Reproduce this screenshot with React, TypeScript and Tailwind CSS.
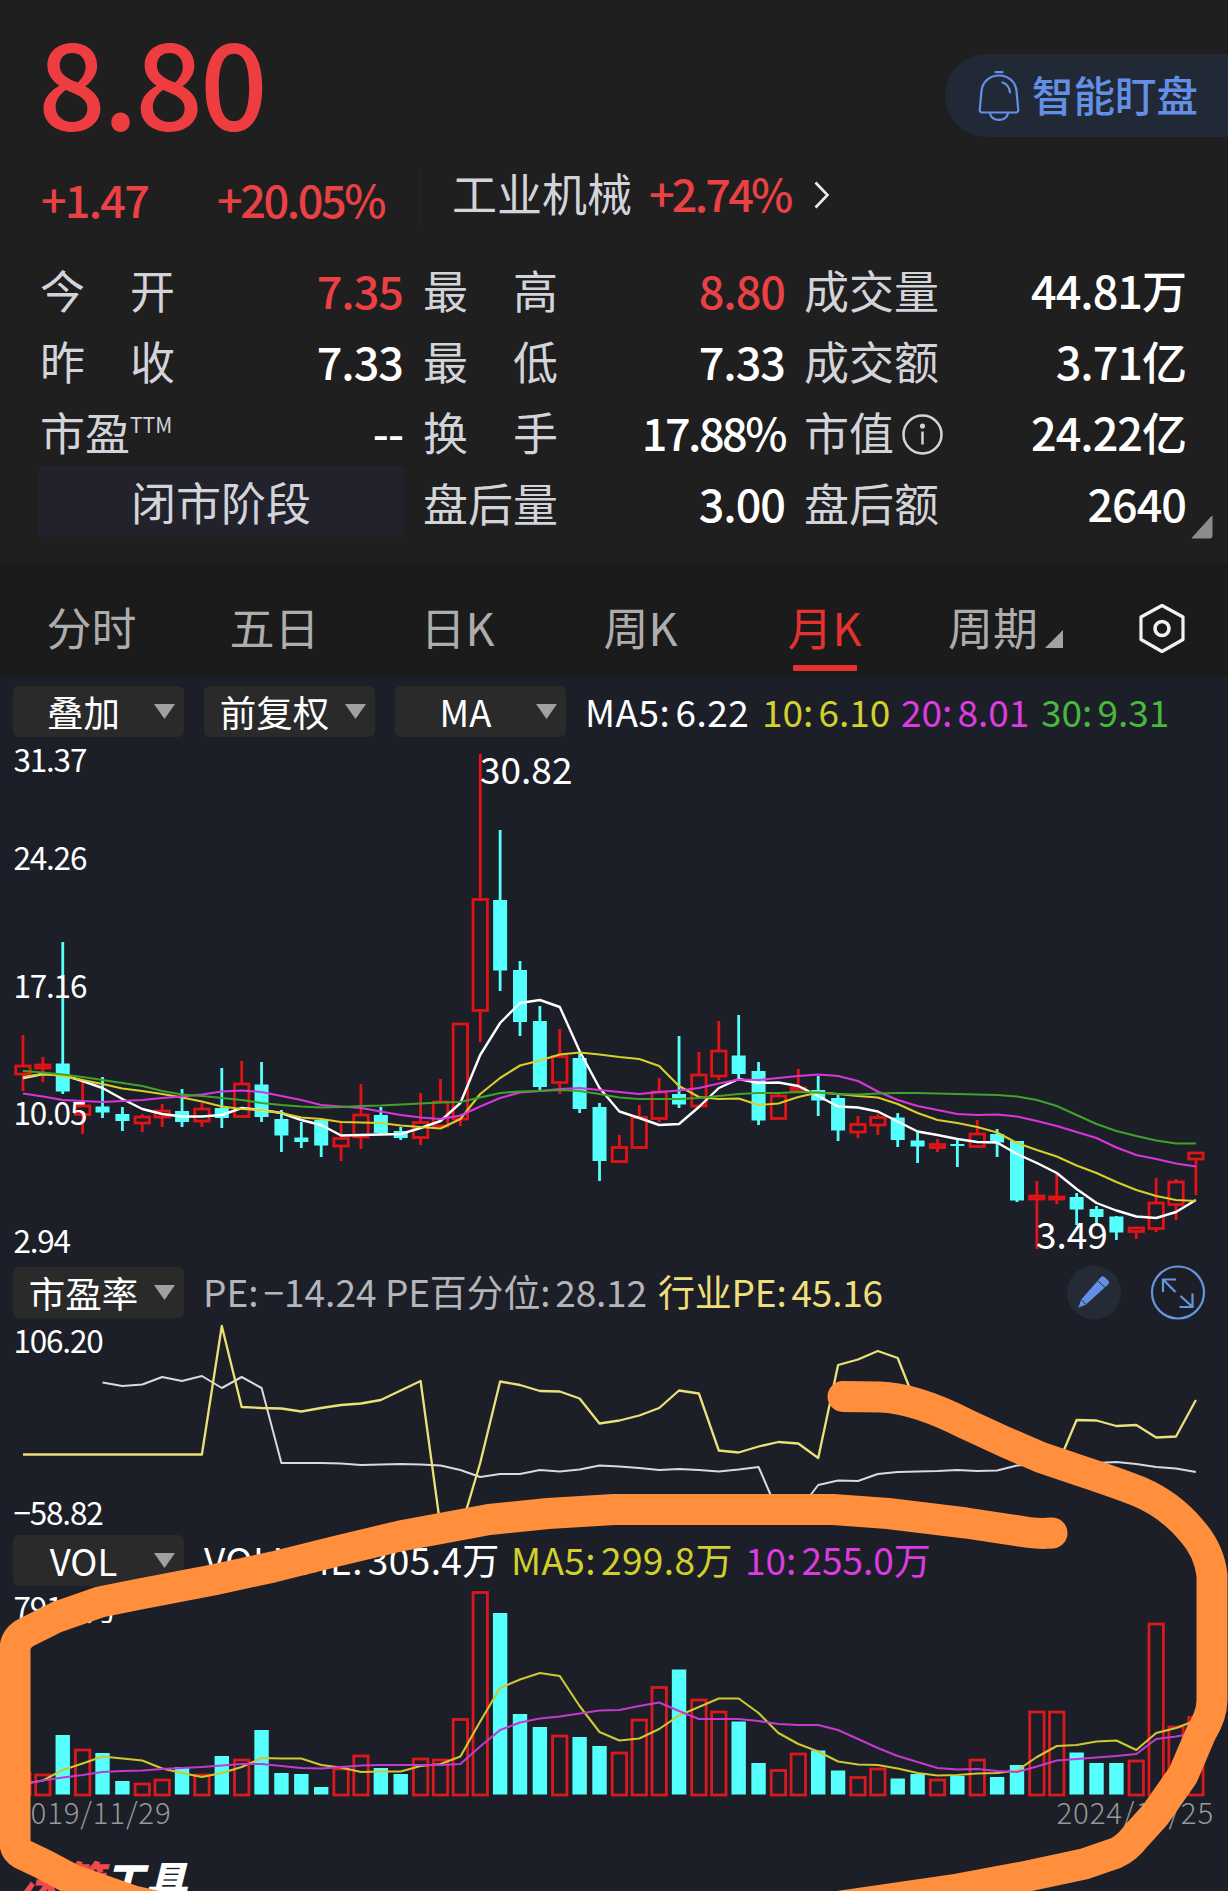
import React from "react";
import clsx from "clsx";

enum Trend {
  Up = "up",
  Down = "down",
}

// trend, high, body top, body bottom, low, volume top
type Bar = [Trend, number, number, number, number, number];

const U = Trend.Up;
const D = Trend.Down;

const bars: Bar[] = [
  [U, 1035, 1065, 1075, 1091, 1772],
  [U, 1057, 1064, 1069, 1082, 1774],
  [D, 942, 1063.5, 1091.5, 1094, 1735],
  [U, 1081, 1105, 1115.5, 1134, 1749],
  [D, 1077, 1106.5, 1112.5, 1118, 1753],
  [D, 1107, 1114, 1121, 1131, 1781],
  [U, 1114, 1116, 1124, 1132, 1783],
  [U, 1104, 1110, 1118, 1127, 1779],
  [D, 1089, 1111, 1122, 1127, 1767],
  [U, 1103, 1108, 1122, 1127, 1774],
  [D, 1068, 1108, 1118, 1128, 1756],
  [U, 1061, 1083, 1117.5, 1117.5, 1759],
  [D, 1062, 1084.5, 1117, 1122, 1730],
  [D, 1110, 1119, 1135.5, 1152, 1773],
  [D, 1122, 1137.5, 1142, 1148, 1774],
  [D, 1120, 1120, 1145.5, 1157, 1787],
  [U, 1123, 1137.5, 1147, 1161, 1768],
  [U, 1084, 1114, 1138, 1149, 1755],
  [D, 1107, 1115, 1133, 1134, 1768],
  [D, 1127, 1131, 1138, 1140, 1774],
  [U, 1093, 1121.5, 1138.5, 1145, 1758],
  [U, 1079, 1101, 1127, 1127, 1759],
  [U, 1023, 1023, 1120, 1126, 1718.5],
  [U, 754, 898.5, 1011.5, 1042, 1591.5],
  [D, 830, 900, 970.5, 991, 1613],
  [D, 961, 970, 1022, 1036, 1714],
  [D, 1006, 1021, 1087, 1091, 1727],
  [U, 1029, 1055.5, 1083.5, 1094, 1735],
  [D, 1052, 1058, 1109, 1113, 1737],
  [D, 1103, 1107, 1161, 1181, 1746],
  [U, 1135, 1146.5, 1162.5, 1163, 1752],
  [U, 1105, 1116.5, 1148.5, 1149, 1719],
  [U, 1078, 1091, 1119.5, 1122, 1686.5],
  [D, 1036, 1094, 1104.5, 1108, 1669.5],
  [U, 1052, 1074, 1107, 1107, 1699],
  [U, 1021, 1050, 1077, 1080, 1711],
  [D, 1015, 1055.5, 1074, 1078, 1721.5],
  [D, 1062, 1071, 1120.5, 1125, 1763],
  [U, 1093, 1095, 1119.5, 1119.5, 1769.5],
  [U, 1069, 1087, 1092, 1092, 1753],
  [D, 1076, 1090, 1100.5, 1116, 1750.5],
  [D, 1094, 1098, 1130.5, 1141, 1770.5],
  [U, 1116, 1123.5, 1133, 1138, 1776.5],
  [U, 1114, 1116.5, 1126, 1135, 1768],
  [D, 1113, 1117.5, 1140, 1147, 1778.5],
  [D, 1132, 1140.5, 1146.5, 1163, 1774],
  [U, 1139, 1143.5, 1148.5, 1152, 1779],
  [D, 1138, 1144, 1146, 1167, 1776],
  [U, 1120, 1133, 1147.5, 1148, 1759],
  [D, 1129, 1134, 1142.5, 1157, 1777],
  [D, 1141, 1141, 1200.5, 1202, 1765],
  [U, 1181, 1195, 1200, 1249, 1711],
  [U, 1173, 1196, 1200, 1204, 1711],
  [D, 1193, 1197, 1209.5, 1225, 1752.5],
  [D, 1206, 1209, 1217, 1223, 1763],
  [D, 1216, 1216.5, 1232.5, 1240, 1763],
  [U, 1227, 1227, 1232.5, 1239, 1760],
  [U, 1178, 1202, 1229.5, 1232, 1623],
  [U, 1179, 1181, 1205.5, 1220, 1726],
  [U, 1152, 1152, 1160, 1195, 1716.5],
];

const ma5 = [
  1078, 1074, 1075, 1081, 1088, 1099, 1109, 1114, 1116.5, 1116.5, 1115, 1108,
  1110, 1113, 1120, 1125, 1135.5, 1135, 1134.5, 1134, 1128, 1121, 1103, 1055,
  1023, 1003, 1000, 1007, 1051, 1088, 1111.5, 1118, 1125, 1124, 1107, 1088,
  1079, 1083, 1082.5, 1086, 1096, 1106.5, 1107.5, 1111.5, 1121.5, 1131.5, 1135,
  1139, 1142, 1142.5, 1154, 1163, 1173, 1189, 1203, 1210.5, 1216.5, 1218, 1212,
  1200,
];
const ma10 = [
  1077, 1074, 1076, 1080, 1084, 1088.5, 1091, 1094, 1097.5, 1101.5, 1106.5,
  1109, 1110, 1113, 1117.5, 1119, 1122, 1122.5, 1123, 1125.5, 1127, 1128.5,
  1119, 1094, 1078, 1065.5, 1060.5, 1054.5, 1052.5, 1054.5, 1057, 1059, 1066,
  1086, 1097, 1099, 1098.5, 1105, 1103.5, 1097, 1092.5, 1094, 1096, 1097.5,
  1104, 1113, 1120, 1123, 1127, 1132.5, 1143, 1150, 1156.5, 1165.5, 1173, 1182,
  1190, 1196, 1200, 1201,
];
const ma20 = [
  1093.5, 1096.5, 1100, 1101, 1102, 1101, 1100, 1098, 1096.5, 1094.5, 1091.5,
  1090.5, 1092, 1096, 1100, 1105, 1106.5, 1108, 1111.5, 1115, 1117.5, 1119,
  1115.5, 1106.5, 1098, 1092.5, 1091, 1089, 1088, 1090, 1092, 1094, 1092,
  1090.5, 1088, 1083.5, 1079.5, 1080, 1078, 1076, 1074.5, 1076, 1081, 1091.5,
  1100, 1106, 1110, 1114, 1115, 1114.5, 1116.5, 1121, 1126, 1132, 1138, 1147.5,
  1155, 1159, 1163.5, 1166.5,
];
const ma30 = [
  1071, 1072.5, 1074.5, 1077, 1080, 1083, 1086, 1091, 1094.5, 1096, 1098, 1100,
  1103, 1105, 1106.5, 1107.5, 1107, 1106, 1105.5, 1104.5, 1103.5, 1102.5, 1102,
  1097.5, 1093, 1091.5, 1091, 1090, 1091, 1094, 1097.5, 1099, 1099, 1099, 1098,
  1096, 1094, 1093, 1093, 1092, 1092.5, 1094, 1094.5, 1093.5, 1093, 1093,
  1093.5, 1094, 1094.5, 1095, 1096.5, 1100, 1106, 1115, 1124, 1131, 1136,
  1140.5, 1143.5, 1143.5,
];

const industryPe = [
  1454.5, 1454.5, 1454.5, 1454.5, 1454.5, 1454.5, 1454.5, 1454.5, 1454.5,
  1454.5, 1326, 1407, 1408, 1408.5, 1411.5, 1408, 1405, 1403.5, 1400, 1390.5,
  1381, 1527, 1530, 1463, 1381.5, 1385, 1391, 1391.5, 1398.5, 1423.5, 1420.5,
  1415.5, 1408, 1390.5, 1393.5, 1450.5, 1452.5, 1446.5, 1442, 1443.5, 1458,
  1365, 1359.5, 1351, 1358, 1408, 1413, 1421, 1431, 1440, 1447, 1440, 1467,
  1420, 1420.5, 1426, 1425, 1437.5, 1436.5, 1400,
];
// the stock's own series only begins four months in
const stockPe = [
  1382.5, 1386, 1384.5, 1377, 1381, 1376, 1388, 1377, 1388, 1463, 1463, 1463,
  1463.5, 1465, 1464.5, 1464, 1464.5, 1465.5, 1470, 1477, 1474, 1474, 1470,
  1471.5, 1469.5, 1465.5, 1466.5, 1468, 1470, 1469, 1470, 1471.5, 1469.5,
  1467, 1513, 1511, 1485, 1480.5, 1481, 1474, 1472, 1471.5, 1471, 1470, 1471,
  1470.5, 1465.5, 1464, 1464, 1464, 1463, 1462, 1464, 1467, 1468.5, 1472,
];

const volMa5 = [
  1784, 1780.5, 1770, 1763.5, 1756.5, 1758.5, 1760.5, 1768.5, 1773, 1777, 1773,
  1767, 1758, 1758.5, 1758.5, 1765, 1767.5, 1772, 1771.5, 1771.5, 1766, 1764,
  1756.5, 1721.5, 1688, 1679.5, 1673, 1676, 1706, 1732, 1740.5, 1738.5, 1729,
  1715.5, 1707, 1698.5, 1698.5, 1713, 1733, 1744, 1751.5, 1761.5, 1764.5, 1765,
  1768.5, 1773, 1775.5, 1775, 1773.5, 1773, 1770.5, 1757, 1746, 1745, 1741.5,
  1740.5, 1750, 1733, 1728, 1720.5,
];
const volMa10 = [
  1784, 1780.5, 1777.5, 1775, 1772, 1771, 1770.5, 1769, 1768, 1767, 1765.5,
  1764, 1764, 1766, 1768, 1768.5, 1767, 1765.5, 1765, 1765, 1765, 1765, 1764,
  1746.5, 1730, 1722.5, 1718.5, 1716.5, 1713.5, 1710.5, 1710, 1706, 1702.5,
  1711, 1719, 1719, 1719, 1721, 1724, 1725, 1725, 1730, 1739, 1748, 1756, 1762,
  1768, 1769.5, 1769, 1771, 1772, 1766.5, 1760.5, 1759, 1757.5, 1756, 1754,
  1739, 1736.5, 1733,
];

const tabs = ["分时", "五日", "日K", "周K", "月K"];

const x = (index: number) => 23 + index * 19.88;

const Line = ({
  values,
  color,
  offset = 0,
  width = 2.1,
}: {
  values: number[];
  color: string;
  offset?: number;
  width?: number;
}) => (
  <polyline
    points={values.map((y, i) => `${x(i + offset).toFixed(1)},${y}`).join(" ")}
    fill="none"
    stroke={color}
    strokeWidth={width}
    strokeLinejoin="round"
  />
);

const AxisLabel = ({ y, children }: { y: number; children: string }) => (
  <text
    x="13.500"
    y={y}
    fontSize="31.500"
    letterSpacing="-1.200"
    fill="#ffffff"
  >
    {children}
  </text>
);

const Dropdown = ({ label }: { label: string }) => (
  <button className="flex h-[51px] w-[171px] shrink-0 items-center rounded-md bg-[#2a2a2b]">
    <span className="w-[141px] text-center text-[36.500px] leading-[51px] text-white">
      {label}
    </span>
    <svg width="21" height="15" viewBox="0 0 21 15">
      <path d="M0 0h21L10.5 15z" fill="#9fa09f" />
    </svg>
  </button>
);

const Legend = ({
  name,
  value,
  className,
}: {
  name: string;
  value: string;
  className?: string;
}) => (
  <span className={clsx("flex gap-[5px]", className)}>
    <span>{name}:</span>
    <span>{value}</span>
  </span>
);

const Stat = ({
  label,
  value,
  red,
  children,
}: {
  label: string;
  value: string;
  red?: boolean;
  children?: React.ReactNode;
}) => (
  <div className="flex h-[71px] items-center justify-between pr-px pt-[3px]">
    <span className="flex items-center whitespace-pre text-[#d3d3da]">
      {label}
      {children}
    </span>
    <span
      className={clsx(
        "font-medium",
        value.endsWith("%") ? "tracking-[-2.5px]" : "tracking-[-1px]",
        red ? "text-[#ea4144]" : "text-white",
      )}
    >
      {value}
    </span>
  </div>
);

const Header = () => (
  <header className="h-[563px] bg-[#1f1f20]">
    <div className="flex h-[158px] justify-between pl-[38px]">
      <span className="text-[119px] font-medium leading-[157px] tracking-[-3px] text-[#ee3d41]">
        8.80
      </span>
      <button className="mt-[54px] flex h-[83px] w-[283px] items-center rounded-l-full bg-[#222936] pl-[33px] text-[#648fe6]">
        <svg
          width="42"
          height="50"
          viewBox="0 0 42 50"
          fill="none"
          stroke="currentColor"
          strokeWidth="2.200"
          strokeLinecap="round"
        >
          <path d="M17.500 1.200h7" />
          <path d="M4.500 41.500h33c2 0 3-1 2.700-3L38.500 20C37.500 10.500 30 4.500 21 4.500S4.500 10.500 3.500 20L1.800 38.500c-.3 2 .7 3 2.700 3z" />
          <path d="M12 42.500c1 4 4.500 6.300 9 6.300s8-2.300 9-6.300" />
          <path d="M24.500 11.500c4.500 1.500 7 5 7.500 10" />
        </svg>
        <span className="-mt-[3px] ml-3 text-[41.500px] font-medium">
          智能盯盘
        </span>
      </button>
    </div>
    <div className="flex h-[95px] items-start pl-[41px] text-[45px] text-[#ea4144]">
      <span className="w-[176px] font-medium leading-[81px] tracking-[-1.8px]">
        +1.47
      </span>
      <span className="w-[202px] font-medium leading-[81px] tracking-[-2.4px]">
        +20.05%
      </span>
      <span className="mt-2.5 h-[57px] w-px bg-[#242427]" />
      <span className="ml-8 w-[197px] leading-[69px] text-[#d3d3da]">
        工业机械
      </span>
      <span className="w-[165px] font-medium leading-[69px] tracking-[-2.8px]">
        +2.74%
      </span>
      <svg className="mt-[23px]" width="16" height="28" viewBox="0 0 16 28">
        <path
          d="M1.500 1.500L13.500 14 1.500 26.500"
          fill="none"
          stroke="#ececec"
          strokeWidth="2.600"
        />
      </svg>
    </div>
    <div className="flex text-[45px] leading-[68px]">
      <div className="ml-10 w-[364px]">
        <Stat label="今　开" value="7.35" red />
        <Stat label="昨　收" value="7.33" />
        <Stat label="市盈" value="--">
          <span className="-mt-4 text-[21px] leading-5">TTM</span>
        </Stat>
        <div className="-ml-0.5 h-[71px] rounded bg-[#22222c] pt-0.5 text-center text-[#d3d3da]">
          闭市阶段
        </div>
      </div>
      <div className="ml-[19px] w-[363px]">
        <Stat label="最　高" value="8.80" red />
        <Stat label="最　低" value="7.33" />
        <Stat label="换　手" value="17.88%" />
        <Stat label="盘后量" value="3.00" />
      </div>
      <div className="ml-[18px] w-[383px]">
        <Stat label="成交量" value="44.81万" />
        <Stat label="成交额" value="3.71亿" />
        <Stat label="市值" value="24.22亿">
          <svg
            className="ml-2 mt-1"
            width="41"
            height="41"
            viewBox="0 0 41 41"
            fill="none"
            stroke="#d3d3da"
            strokeWidth="2.500"
          >
            <circle cx="20.500" cy="20.500" r="19" />
            <path d="M20.500 17.500v13" />
            <circle cx="20.500" cy="12" r="1.300" fill="#d3d3da" />
          </svg>
        </Stat>
        <Stat label="盘后额" value="2640" />
      </div>
      <svg
        className="ml-[3px] mt-[262px]"
        width="24"
        height="24"
        viewBox="0 0 24 24"
      >
        <path
          d="M22 1v20a2 2 0 0 1-2 2H2z"
          fill="#8c8c90"
          stroke="#8c8c90"
          strokeLinejoin="round"
        />
      </svg>
    </div>
  </header>
);

const PeriodTabs = () => (
  <nav className="flex h-[113px] bg-[#1b1b1b] text-[45px] text-[#adadad]">
    {tabs.map((tab) => {
      const isActive = tab === "月K";
      return (
        <div
          key={tab}
          className={clsx(
            "flex w-[183px] flex-col items-center pt-6 leading-[79px]",
            isActive && "pl-0.5 text-[#e6322f]",
          )}
        >
          {tab}
          {isActive && (
            <span className="-mt-px h-1.5 w-16 rounded-[1px] bg-[#e6322f]" />
          )}
        </div>
      );
    })}
    <div className="ml-[33px] flex pt-6 leading-[79px]">
      周期
      <svg className="ml-[7px] mt-[43px]" width="18" height="18">
        <path d="M18 0v18H0z" fill="#a89fa0" />
      </svg>
    </div>
    <svg
      className="ml-[75px] mt-10"
      width="48"
      height="52"
      viewBox="0 0 48 52"
      fill="none"
      stroke="#f2f2f2"
      strokeLinejoin="round"
    >
      <path d="M24 2.500L45 14v22.500L24 48.500 3 36.500V14z" strokeWidth="3.200" />
      <circle cx="24" cy="25.500" r="7" strokeWidth="3.600" />
    </svg>
  </nav>
);

const CandleChart = () => (
  <svg
    className="block overflow-visible"
    width="1228"
    height="526"
    viewBox="0 740 1228 526"
  >
    {bars.map(([trend, high, top, bottom, low], i) => {
      const cx = x(i);
      if (trend === Trend.Up) {
        return (
          <g key={i} stroke="#e21316" strokeWidth="2.800" fill="none">
            <path d={`M${cx} ${high}V${top}M${cx} ${bottom}V${low}`} />
            <rect
              x={cx - 7.2}
              y={top + 1}
              width="14.400"
              height={Math.max(bottom - top - 2, 1)}
            />
          </g>
        );
      }
      return (
        <g key={i} fill="#54fffc">
          <rect x={cx - 1.4} y={high} width="2.800" height={low - high} />
          <rect x={cx - 7} y={top} width="14" height={bottom - top} />
        </g>
      );
    })}
    <Line values={ma5} color="#ffffff" width={2.4} />
    <Line values={ma10} color="#d9cf2b" />
    <Line values={ma20} color="#d935dd" />
    <Line values={ma30} color="#3fa32b" />
    <AxisLabel y={772}>31.37</AxisLabel>
    <AxisLabel y={869.5}>24.26</AxisLabel>
    <AxisLabel y={997.5}>17.16</AxisLabel>
    <AxisLabel y={1125}>10.05</AxisLabel>
    <AxisLabel y={1253}>2.94</AxisLabel>
    <text x="480" y="784" fontSize="37" fill="#fff">
      30.82
    </text>
    <text x="1036" y="1248.500" fontSize="37" fill="#fff">
      3.49
    </text>
  </svg>
);

const PeChart = () => (
  <svg
    className="block overflow-visible"
    width="1228"
    height="217"
    viewBox="0 1318 1228 217"
  >
    <Line values={stockPe} color="#d8dadd" offset={4} width={2} />
    <Line values={industryPe} color="#ece07a" width={2.3} />
    <AxisLabel y={1352.5}>106.20</AxisLabel>
    <AxisLabel y={1524.5}>−58.82</AxisLabel>
  </svg>
);

const VolumeChart = () => (
  <svg
    className="block overflow-visible"
    width="1228"
    height="212"
    viewBox="0 1586 1228 212"
  >
    {bars.map(([trend, , , , , top], i) =>
      trend === Trend.Up ? (
        <rect
          key={i}
          x={x(i) - 7.2}
          y={top + 1}
          width="14.400"
          height={1795 - top - 1}
          fill="none"
          stroke="#d81a1e"
          strokeWidth="2.800"
        />
      ) : (
        <rect
          key={i}
          x={x(i) - 7.2}
          y={top}
          width="14.400"
          height={1794.5 - top}
          fill="#54fffc"
        />
      ),
    )}
    <Line values={volMa5} color="#cfc832" />
    <Line values={volMa10} color="#c23bd0" />
    <AxisLabel y={1620}>791.4万</AxisLabel>
  </svg>
);

const Marker = () => (
  <svg
    className="pointer-events-none absolute left-0 top-0"
    width="1228"
    height="1891"
    viewBox="0 0 1228 1891"
    fill="none"
    stroke="#ff8f3d"
    strokeWidth="31"
    strokeLinecap="round"
    strokeLinejoin="round"
  >
    <path d="M1052 1533Q1040 1534 1029 1532.500L966 1523 888 1513.500 833 1509.500H614L548 1513.500 489 1519.500 438 1529 400 1536 333 1552 273 1567 213 1580 140 1594 100 1602 57 1617 27 1632Q15 1638 15 1650V1843Q15 1850 22 1854L43 1864 73 1880 133 1901 220 1920 800 1912 958 1889 1028 1876 1084 1864 1116 1853Q1127 1848 1136 1836L1155 1815 1183 1775 1201 1733Q1212 1715 1212 1700V1575Q1209 1550 1191 1530 1170 1505 1140 1492 1120 1484 1084 1472L1041 1457.500 1005 1442 966 1424Q915 1398 880 1397L843 1396.500" />
  </svg>
);

const App = () => {
  return (
    <div className="relative h-[1891px] w-[1228px] overflow-hidden bg-[#1c1f27] font-['Noto_Sans_CJK_SC',sans-serif] text-white">
      <Header />
      <PeriodTabs />
      <div className="flex h-16 items-start gap-5 pl-[13px] pt-2.5 text-[37px] leading-[50px]">
        <Dropdown label="叠加" />
        <Dropdown label="前复权" />
        <Dropdown label="MA" />
        <div className="-ml-px flex whitespace-nowrap">
          <Legend
            className="w-[177px] tracking-[0.5px]"
            name="MA5"
            value="6.22"
          />
          <Legend
            className="w-[139px] text-[#d2d02d]"
            name="10"
            value="6.10"
          />
          <Legend
            className="w-[140px] text-[#dc3ce0]"
            name="20"
            value="8.01"
          />
          <Legend className="text-[#47b83b]" name="30" value="9.31" />
        </div>
      </div>
      <CandleChart />
      <div className="flex h-[52px] items-start pl-[13px] pt-px text-[37px] leading-[49px]">
        <Dropdown label="市盈率" />
        <div className="ml-[19px] flex whitespace-nowrap text-[#b3b5b8]">
          <Legend className="w-[182px]" name="PE" value="−14.24" />
          <Legend
            className="w-[273px] tracking-[-0.2px]"
            name="PE百分位"
            value="28.12"
          />
          <Legend
            className="w-[409px] text-[#efdf7c] tracking-[-0.2px]"
            name="行业PE"
            value="45.16"
          />
        </div>
        <svg
          className="-mt-0.5 shrink-0"
          width="140"
          height="55"
          viewBox="0 0 140 55"
          fill="none"
        >
          <circle cx="27" cy="27.500" r="27" fill="#242a36" />
          <path
            d="M33.500 12.500a3 3 0 0 1 4.200-.2l3.200 3a3 3 0 0 1 .2 4.200L19 39.500l-7.500 3.200 2.500-8z"
            fill="#6390e6"
          />
          <path d="M31 16l7 6.500M14.500 35l4 4" stroke="#242a36" />
          <g stroke="#6597e0" strokeWidth="2.200">
            <circle cx="111" cy="27.500" r="26" />
            <path d="M96 27V14.500h13M97 15.500l11.500 11.500M125.500 28.500V42H112.500M113.500 31l11.500 10.500" />
          </g>
        </svg>
      </div>
      <PeChart />
      <div className="flex h-[51px] items-start pl-[13px] text-[37px] leading-[49px]">
        <Dropdown label="VOL" />
        <div className="ml-5 flex whitespace-nowrap">
          <Legend
            className="w-[307px] tracking-[0.4px]"
            name="VOLUME"
            value="305.4万"
          />
          <Legend
            className="w-[234px] text-[#d2d02d] tracking-[0.4px]"
            name="MA5"
            value="299.8万"
          />
          <Legend className="text-[#dc3ce0]" name="10" value="255.0万" />
        </div>
      </div>
      <VolumeChart />
      <div className="flex justify-between pl-3.5 pr-3.5 text-[29.500px] font-light leading-[27px] tracking-[0.8px] text-[#97989a]">
        <span>2019/11/29</span>
        <span>2024/11/25</span>
      </div>
      <div className="mt-[26px] pl-[19px] text-[42px] font-black italic leading-[56px]">
        <span className="text-[#f04a4f]">决策</span>工具
      </div>
      <Marker />
    </div>
  );
};

export default App;
